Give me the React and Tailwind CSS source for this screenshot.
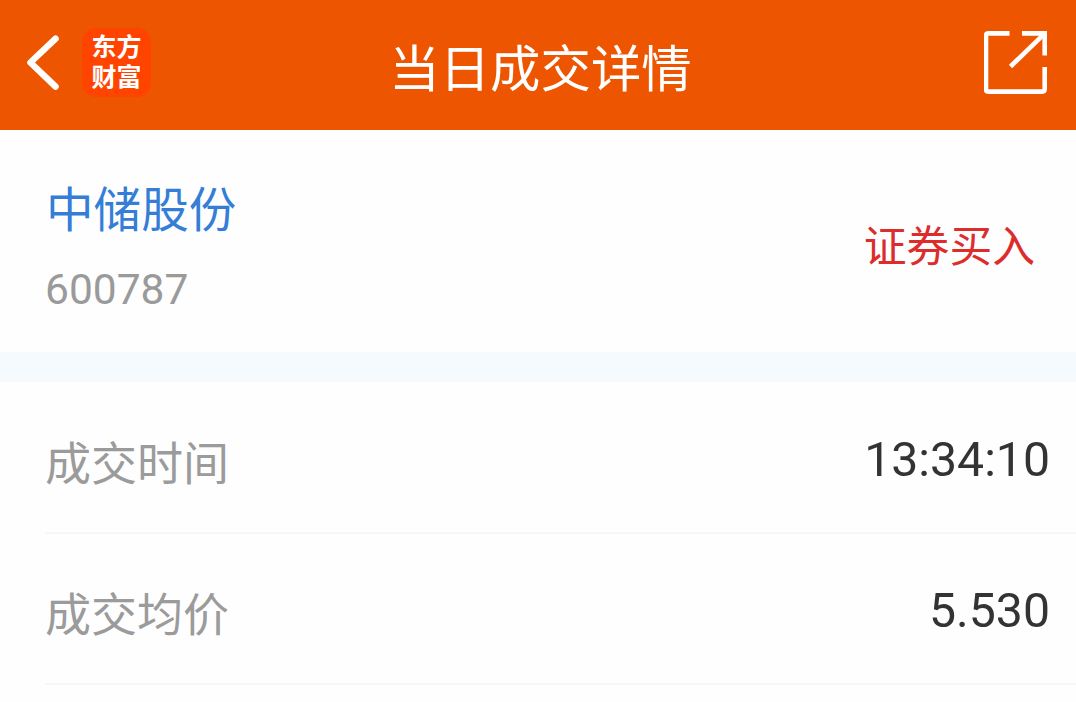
import React from 'react';

const rows = [
  { label: '成交时间', value: '13:34:10' },
  { label: '成交均价', value: '5.530' },
];

function BackIcon() {
  return (
    <svg className="h-[56px] w-[34px]" viewBox="0 0 34 56" fill="none" stroke="#fff" strokeWidth="6.4">
      <path d="M29.6 3.6 L4.4 27.5 L29.6 51.6" strokeLinejoin="round" strokeLinecap="round" />
    </svg>
  );
}

function ShareIcon() {
  return (
    <svg className="h-[64px] w-[64px]" viewBox="0 0 64 64" fill="none" stroke="#fff" strokeWidth="4.6">
      <path d="M25.5 2.4 H4.5 Q2 2.4 2 5 V58 Q2 60.6 4.5 60.6 H58.2 Q60.7 60.6 60.7 58 V36" />
      <path d="M38 2.4 H60.7 V24.5" />
      <path d="M60 3.2 L26.5 35.5" />
    </svg>
  );
}

function Header() {
  return (
    <header className="flex h-[130px] items-start justify-between bg-[#ee5500] pl-[26px] pr-[28px] text-white">
      <div className="flex w-[160px] items-start pt-[28px]">
        <div className="pt-[7px]">
          <BackIcon />
        </div>
        <div className="ml-[22px] flex h-[69px] w-[69px] flex-col items-center justify-center rounded-[14px] bg-[#ff4400] pt-px text-[25px] leading-[30px] font-bold">
          <span>东方</span>
          <span>财富</span>
        </div>
      </div>
      <h1 className="pt-[34px] pl-[7px] text-[50.4px] leading-[72px]">当日成交详情</h1>
      <div className="flex w-[160px] justify-end pt-[31px]">
        <ShareIcon />
      </div>
    </header>
  );
}

function StockInfo() {
  return (
    <section className="flex h-[222px] items-start justify-between pl-[46px] pr-[41px]">
      <div className="pt-[46px]">
        <p className="text-[47.6px] leading-[70px] text-[#347ed7]">中储股份</p>
        <p className="-ml-px mt-[19px] text-[42.5px] leading-[50px] text-[#9a9a9a]">600787</p>
      </div>
      <p className="pt-[86px] text-[42.8px] leading-[62px] text-[#dc2c2c]">证券买入</p>
    </section>
  );
}

function DetailRow({ label, value }) {
  return (
    <div className="ml-[45px] flex h-[151px] items-start justify-between border-b-2 border-[#f7f7f7] pr-[26px]">
      <span className="pt-[48px] text-[46px] leading-[66px] text-[#9b9b9b]">{label}</span>
      <span className="pt-[49px] text-[48.2px] leading-[56px] text-[#333333]">{value}</span>
    </div>
  );
}

function App() {
  return (
    <div className="h-[702px] w-[1076px] overflow-hidden bg-[#fefefe] font-['Roboto','Noto_Sans_CJK_SC',sans-serif]">
      <Header />
      <StockInfo />
      <div className="h-[30px] bg-[#f5faff]" />
      <div className="pt-px">
        {rows.map((row) => (
          <DetailRow key={row.label} label={row.label} value={row.value} />
        ))}
      </div>
    </div>
  );
}

export default App;
